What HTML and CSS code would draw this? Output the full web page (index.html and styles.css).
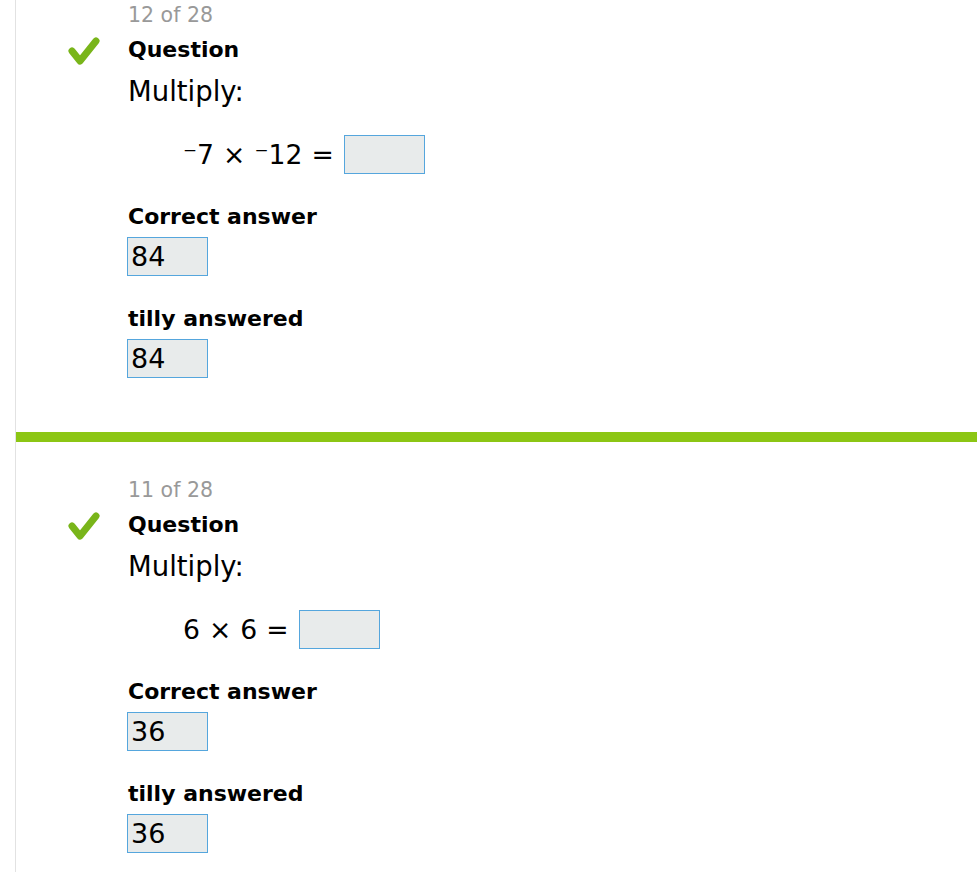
FILE: index.html
```html
<!DOCTYPE html>
<html>
<head>
<meta charset="utf-8">
<link rel="stylesheet" href="styles.css">
</head>
<body>
<div class="page">
  <section class="item">
    <div class="counter">12 of 28</div>
    <div class="status"><svg width="36" height="36" viewBox="0 0 36 36"><polyline points="6,17 14,27 30,7" fill="none" stroke="#79b51a" stroke-width="7" stroke-linecap="round" stroke-linejoin="round"/></svg></div>
    <div class="label">Question</div>
    <div class="prompt">Multiply:</div>
    <div class="equation">
      <span>⁻7</span><span>×</span><span>⁻12</span><span>=</span><span class="box"></span>
    </div>
    <div class="label gap">Correct answer</div>
    <div class="box answer">84</div>
    <div class="label gap">tilly answered</div>
    <div class="box answer">84</div>
  </section>
  <div class="divider"></div>
  <section class="item second">
    <div class="counter">11 of 28</div>
    <div class="status"><svg width="36" height="36" viewBox="0 0 36 36"><polyline points="6,17 14,27 30,7" fill="none" stroke="#79b51a" stroke-width="7" stroke-linecap="round" stroke-linejoin="round"/></svg></div>
    <div class="label">Question</div>
    <div class="prompt">Multiply:</div>
    <div class="equation">
      <span>6</span><span>×</span><span>6</span><span>=</span><span class="box"></span>
    </div>
    <div class="label gap">Correct answer</div>
    <div class="box answer">36</div>
    <div class="label gap">tilly answered</div>
    <div class="box answer">36</div>
  </section>
</div>
</body>
</html>
```

FILE: styles.css
```css
html, body {
  margin: 0;
  padding: 0;
  background: #ffffff;
}
body {
  font-family: "DejaVu Sans", Verdana, sans-serif;
  color: #000;
  height: 872px;
  overflow: hidden;
}
.page {
  margin-left: 15px;
  border-left: 1px solid #e2e2e2;
  min-height: 872px;
}
.item {
  display: grid;
  grid-template-columns: 112px 1fr;
  padding-top: 3px;
  padding-bottom: 54px;
}
.item > * {
  grid-column: 2;
}
.item.second {
  padding-top: 36px;
}
.counter {
  font-size: 20.5px;
  line-height: 24px;
  color: #999999;
  margin-bottom: 10px;
}
.status {
  grid-column: 1;
  grid-row: 2;
  margin-left: 50px;
  margin-top: -3px;
  height: 26px;
}
.status svg {
  display: block;
}
.label {
  font-size: 22px;
  line-height: 26px;
  font-weight: bold;
}
.item > .label:nth-child(3) {
  grid-row: 2;
}
.label.gap {
  margin-top: 30px;
  margin-bottom: 7px;
}
.prompt {
  font-size: 27.5px;
  line-height: 32px;
  margin-top: 12px;
}
.equation {
  display: flex;
  align-items: center;
  gap: 9px;
  margin-top: 28px;
  padding-left: 55px;
  font-size: 26.67px;
  line-height: 32px;
}
.box {
  box-sizing: border-box;
  width: 81px;
  height: 39px;
  border: 1px solid #55a6dd;
  background: #e8ebeb;
}
.equation .box {
  margin-left: 1px;
}
.answer {
  margin-left: -1px;
  font-size: 27px;
  line-height: 37px;
  padding-left: 3px;
}
.divider {
  height: 10px;
  background: #8cc614;
}
```
